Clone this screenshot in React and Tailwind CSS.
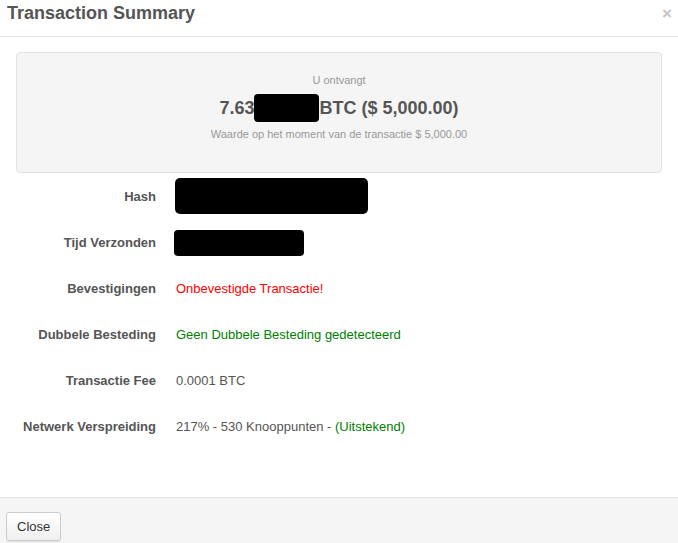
import React from 'react';

const rows = [
  { label: 'Hash', value: <span className="inline-block w-[193px] h-[36px] bg-black rounded-[5px] align-middle -ml-px -mt-[2px]" /> },
  { label: 'Tijd Verzonden', value: <span className="inline-block w-[130px] h-[26px] bg-black rounded-[4px] align-middle -ml-[2px]" /> },
  { label: 'Bevestigingen', value: <span className="text-[#ff0000]">Onbevestigde Transactie!</span> },
  { label: 'Dubbele Besteding', value: <span className="text-[#008000]">Geen Dubbele Besteding gedetecteerd</span> },
  { label: 'Transactie Fee', value: '0.0001 BTC' },
  {
    label: 'Netwerk Verspreiding',
    value: (
      <>
        217% - 530 Knooppunten - <span className="text-[#008000]">(Uitstekend)</span>
      </>
    ),
  },
];

export default function App() {
  return (
    <div className="w-[678px] h-[543px] bg-white flex flex-col text-[#555] font-['Liberation_Sans',Arial,sans-serif]">
      {/* header */}
      <div className="h-[37px] border-b border-[#e5e5e5] flex items-start justify-between pl-[7px] pr-[6px] pt-[3px] shrink-0">
        <h4 className="text-[18px] font-bold leading-[20px] text-[#555]">Transaction Summary</h4>
        <span className="text-[#c6c6c6] text-[17px] font-bold leading-[17px] mt-[2px]">×</span>
      </div>

      {/* body */}
      <div className="flex-1 px-[16px] pt-[15px]">
        <div className="h-[121px] bg-[#f5f5f5] border border-[#e3e3e3] rounded-[4px] flex flex-col items-center pt-[20px]">
          <div className="text-[11px] text-[#999] leading-[14px]">U ontvangt</div>
          <div className="mt-[7px] text-[18px] font-bold leading-[28px] flex items-center">
            <span>7.63</span>
            <span className="inline-block w-[65px] h-[28px] bg-black rounded-[4px]" />
            <span>BTC ($ 5,000.00)</span>
          </div>
          <div className="mt-[5px] text-[11px] text-[#999] leading-[14px]">Waarde op het moment van de transactie $ 5,000.00</div>
        </div>

        <div className="flex flex-col">
          {rows.map((r) => (
            <div key={r.label} className="h-[46px] flex items-center text-[13px] pt-[2px]">
              <div className="w-[140px] text-right font-bold shrink-0">{r.label}</div>
              <div className="pl-[20px]">{r.value}</div>
            </div>
          ))}
        </div>
      </div>

      {/* footer */}
      <div className="h-[46px] border-t border-[#e5e5e5] bg-[#f5f5f5] flex items-start px-[6px] pt-[14px] shrink-0">
        <button className="h-[29px] px-[10px] text-[13px] text-[#333] bg-gradient-to-b from-white to-[#f0f0f0] border border-[#ccc] rounded-[3px] shadow-[0_1px_1px_rgba(0,0,0,0.08)]">
          Close
        </button>
      </div>
    </div>
  );
}
